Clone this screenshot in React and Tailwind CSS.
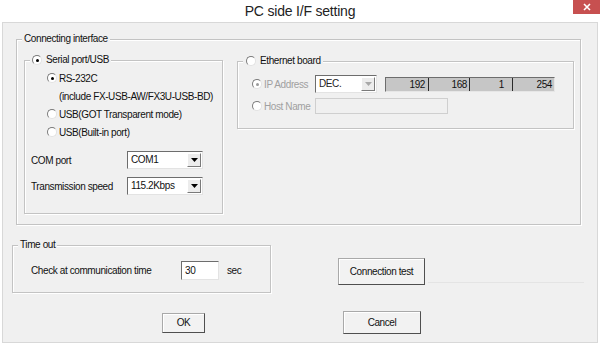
import React from 'react';

const Radio = ({ checked, disabled }) => (
  <span className="flex w-[10px] h-[10px] shrink-0 items-center justify-center rounded-full border border-t-[#7a7a7a] border-l-[#7a7a7a] border-r-[#e2e2e2] border-b-[#e2e2e2] bg-white">
    {checked && <span className={disabled ? 'w-[3px] h-[3px] rounded-full bg-[#9a9a9a]' : 'w-[3px] h-[3px] rounded-full bg-black'} />}
  </span>
);

const Group = ({ label, className, children }) => (
  <div className={`relative border border-[#c3c3c3] shadow-[inset_1px_1px_0_#fff,1px_1px_0_#fff] ${className}`}>
    <div className="absolute -top-[7px] left-[5px] flex items-center gap-[4px] bg-[#f0f0f0] px-[2px] leading-[12px]">
      {label}
    </div>
    {children}
  </div>
);

const Select = ({ value, className, disabled }) => (
  <div className={`flex items-center border border-t-[#6d6d6d] border-l-[#6d6d6d] border-r-[#e3e3e3] border-b-[#e3e3e3] bg-white ${className}`}>
    <span className="flex-1 pl-[3px] leading-[12px]">{value}</span>
    <span className="mr-[1px] flex h-[calc(100%-2px)] w-[14px] items-center justify-center border border-t-white border-l-white border-r-[#7a7a7a] border-b-[#7a7a7a] bg-[#ececec]">
      <svg width="7" height="4" viewBox="0 0 7 4">
        <path d="M0 0h7L3.5 4z" fill={disabled ? '#a8a8a8' : '#000'} />
      </svg>
    </span>
  </div>
);

const Button = ({ children, className }) => (
  <button className={`flex items-center justify-center border border-[#a9a9a9] border-r-[#4f4f4f] border-b-[#4f4f4f] bg-[#f2f2f2] shadow-[inset_1px_1px_0_#fff] leading-[12px] ${className}`}>
    {children}
  </button>
);

const ipFields = [
  { v: '192', cls: 'w-[43px] border-r border-r-[#2a2a2a] pr-[3px] text-right' },
  { v: '168', cls: 'w-[41px] border-r border-r-[#2a2a2a] pr-[2px] text-right' },
  { v: '1', cls: 'w-[43px] border-r border-r-[#2a2a2a] pr-[8px] text-right' },
  { v: '254', cls: 'flex-1 pr-[2px] text-right' },
];

const serialOptions = [
  { label: 'RS-232C', checked: true },
  { label: '(include FX-USB-AW/FX3U-USB-BD)', noRadio: true },
  { label: 'USB(GOT Transparent mode)' },
  { label: 'USB(Built-in port)' },
];

export default function App() {
  return (
    <div className="w-[600px] h-[348px] bg-white text-[10px] tracking-[-0.4px] text-[#111] font-['Liberation_Sans',Arial,sans-serif] overflow-hidden">
      {/* title bar */}
      <div className="relative flex h-[22px] items-center justify-center">
        <span className="text-[14px] tracking-[-0.2px] text-[#222] font-['Liberation_Sans',Arial,sans-serif]">PC side I/F setting</span>
        <div className="absolute right-0 top-0 flex h-[14px] w-[27px] items-center justify-center bg-[#c75050]">
          <svg width="8" height="8" viewBox="0 0 8 8">
            <path d="M1 1l6 6M7 1L1 7" stroke="#fff" strokeWidth="1.6" />
          </svg>
        </div>
      </div>

      {/* dialog body */}
      <div className="mx-[2px] h-[321px] border border-[#d8d8d8] bg-[#f0f0f0]">
        <Group label="Connecting interface" className="ml-[13px] mt-[16px] w-[565px] h-[186px] flex items-start">
          {/* serial port */}
          <Group
            className="ml-[7px] mt-[20px] w-[199px] h-[154px] flex flex-col"
            label={<><Radio checked /><span>Serial port/USB</span></>}
          >
            <div className="flex flex-col pt-[8px] pl-[22px]">
              {serialOptions.map((o) => (
                <div key={o.label} className="flex h-[18px] items-center gap-[1px]">
                  {o.noRadio ? <span className="w-[10px]" /> : <Radio checked={o.checked} />}
                  <span className="ml-[1px]">{o.label}</span>
                </div>
              ))}
            </div>
            <div className="mt-[10px] flex h-[18px] items-center pl-[6px]">
              <span className="w-[96px]">COM port</span>
              <Select value="COM1" className="w-[76px] h-[18px]" />
            </div>
            <div className="mt-[8px] flex h-[18px] items-center pl-[6px]">
              <span className="w-[96px]">Transmission speed</span>
              <Select value="115.2Kbps" className="w-[76px] h-[18px]" />
            </div>
          </Group>

          {/* ethernet */}
          <Group
            className="ml-[14px] mt-[21px] w-[337px] h-[68px] flex flex-col text-[#a0a0a0]"
            label={<><span className="ml-[1px]"><Radio /></span><span className="text-[#111]">Ethernet board</span></>}
          >
            <div className="mt-[13px] flex h-[18px] items-center pl-[14px]">
              <div className="flex w-[63px] items-center gap-[2px]">
                <Radio checked disabled />
                <span>IP Address</span>
              </div>
              <Select value={<span className="text-[#222]">DEC.</span>} disabled className="w-[62px] h-[18px]" />
              <div className="ml-[8px] flex h-[15px] w-[170px] items-center border border-t-[#6d6d6d] border-l-[#6d6d6d] border-r-[#e6e6e6] border-b-[#e6e6e6] bg-[#c6c6c6] text-[#111]">
                {ipFields.map((f) => (
                  <span key={f.v + f.cls} className={`h-full leading-[13px] ${f.cls}`}>{f.v}</span>
                ))}
              </div>
            </div>
            <div className="mt-[4px] flex h-[18px] items-center pl-[14px]">
              <div className="flex w-[63px] items-center gap-[2px]">
                <Radio />
                <span>Host Name</span>
              </div>
              <div className="h-[16px] w-[133px] border border-[#cfcfcf] bg-[#f0f0f0]" />
            </div>
          </Group>
        </Group>

        {/* time out + connection test */}
        <div className="mt-[20px] flex items-start">
          <Group label="Time out" className="ml-[9px] w-[259px] h-[48px] flex items-start">
            <div className="mt-[15px] flex h-[19px] items-center pl-[18px]">
              <span className="w-[150px]">Check at communication time</span>
              <div className="flex h-[19px] w-[38px] items-center border border-t-[#6d6d6d] border-l-[#6d6d6d] border-r-[#e3e3e3] border-b-[#e3e3e3] bg-white pl-[3px]">30</div>
              <span className="ml-[8px]">sec</span>
            </div>
          </Group>
          <Button className="ml-[67px] mt-[13px] w-[87px] h-[27px]">Connection test</Button>
          <div className="ml-[3px] mt-[37px] h-px w-[156px] bg-[#e4e4e4]" />
        </div>

        {/* OK / Cancel */}
        <div className="mt-[18px] flex h-[23px] items-center">
          <Button className="ml-[159px] w-[43px] h-[20px]">OK</Button>
          <Button className="ml-[138px] w-[78px] h-[23px]">Cancel</Button>
        </div>
      </div>
    </div>
  );
}
